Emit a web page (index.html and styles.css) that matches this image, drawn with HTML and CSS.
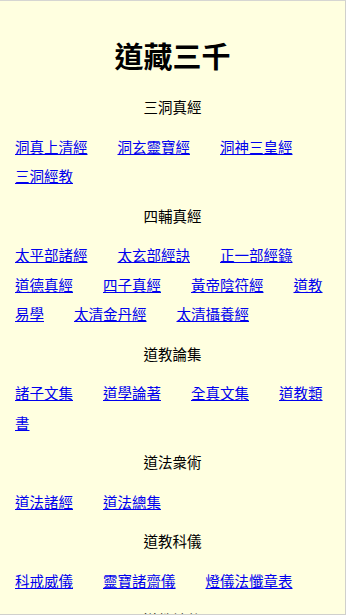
FILE: index.html
```html
<!DOCTYPE html>
<html lang="zh-Hant">
<head>
<meta charset="utf-8">
<title>道藏三千</title>
<link rel="stylesheet" href="styles.css">
</head>
<body>
<div class="frame">
  <h1 class="title">道藏三千</h1>

  <section class="group">
    <h2 class="group-title">三洞真經</h2>
    <div class="links"><a href="#">洞真上清經</a><a href="#">洞玄靈寶經</a><a href="#">洞神三皇經</a><a href="#">三洞經教</a></div>
  </section>

  <section class="group">
    <h2 class="group-title">四輔真經</h2>
    <div class="links"><a href="#">太平部諸經</a><a href="#">太玄部經訣</a><a href="#">正一部經籙</a><a href="#">道德真經</a><a href="#">四子真經</a><a href="#">黃帝陰符經</a><a href="#">道教易學</a><a href="#">太清金丹經</a><a href="#">太清攝養經</a></div>
  </section>

  <section class="group">
    <h2 class="group-title">道教論集</h2>
    <div class="links"><a href="#">諸子文集</a><a href="#">道學論著</a><a href="#">全真文集</a><a href="#">道教類書</a></div>
  </section>

  <section class="group">
    <h2 class="group-title">道法衆術</h2>
    <div class="links"><a href="#">道法諸經</a><a href="#">道法總集</a></div>
  </section>

  <section class="group">
    <h2 class="group-title">道教科儀</h2>
    <div class="links"><a href="#">科戒威儀</a><a href="#">靈寶諸齋儀</a><a href="#">燈儀法懺章表</a></div>
  </section>

  <section class="group">
    <h2 class="group-title">道教神仙</h2>
    <div class="links"><a href="#">神仙傳記</a><a href="#">宮觀地志</a></div>
  </section>
</div>
</body>
</html>
```

FILE: styles.css
```css
html {
  margin: 0;
  padding: 0;
  background: #ffffff;
}

body {
  margin: 0;
  padding: 0;
  font-family: "Noto Sans CJK TC", "Noto Sans", sans-serif;
  font-size: 14.5px;
  color: #000;
}

.frame {
  box-sizing: border-box;
  width: 346px;
  height: 615px;
  overflow: hidden;
  background: #ffffe0;
  border-top: 1px solid #d6d6d2;
  border-right: 1px solid #d0d0cc;
  border-bottom: 1px solid #d0d0cc;
  padding: 0 15px;
}

.title {
  margin: 37px 0 20px;
  font-size: 29px;
  line-height: 34px;
  font-weight: bold;
  text-align: center;
}

.group-title {
  margin: 0 0 10px;
  font-size: 14.5px;
  line-height: 29.5px;
  font-weight: normal;
  text-align: center;
}

.links {
  margin: 0 0 10px;
  line-height: 29.5px;
}

.links a {
  color: #0000ee;
  text-decoration: underline;
  margin-right: 30px;
}
```
